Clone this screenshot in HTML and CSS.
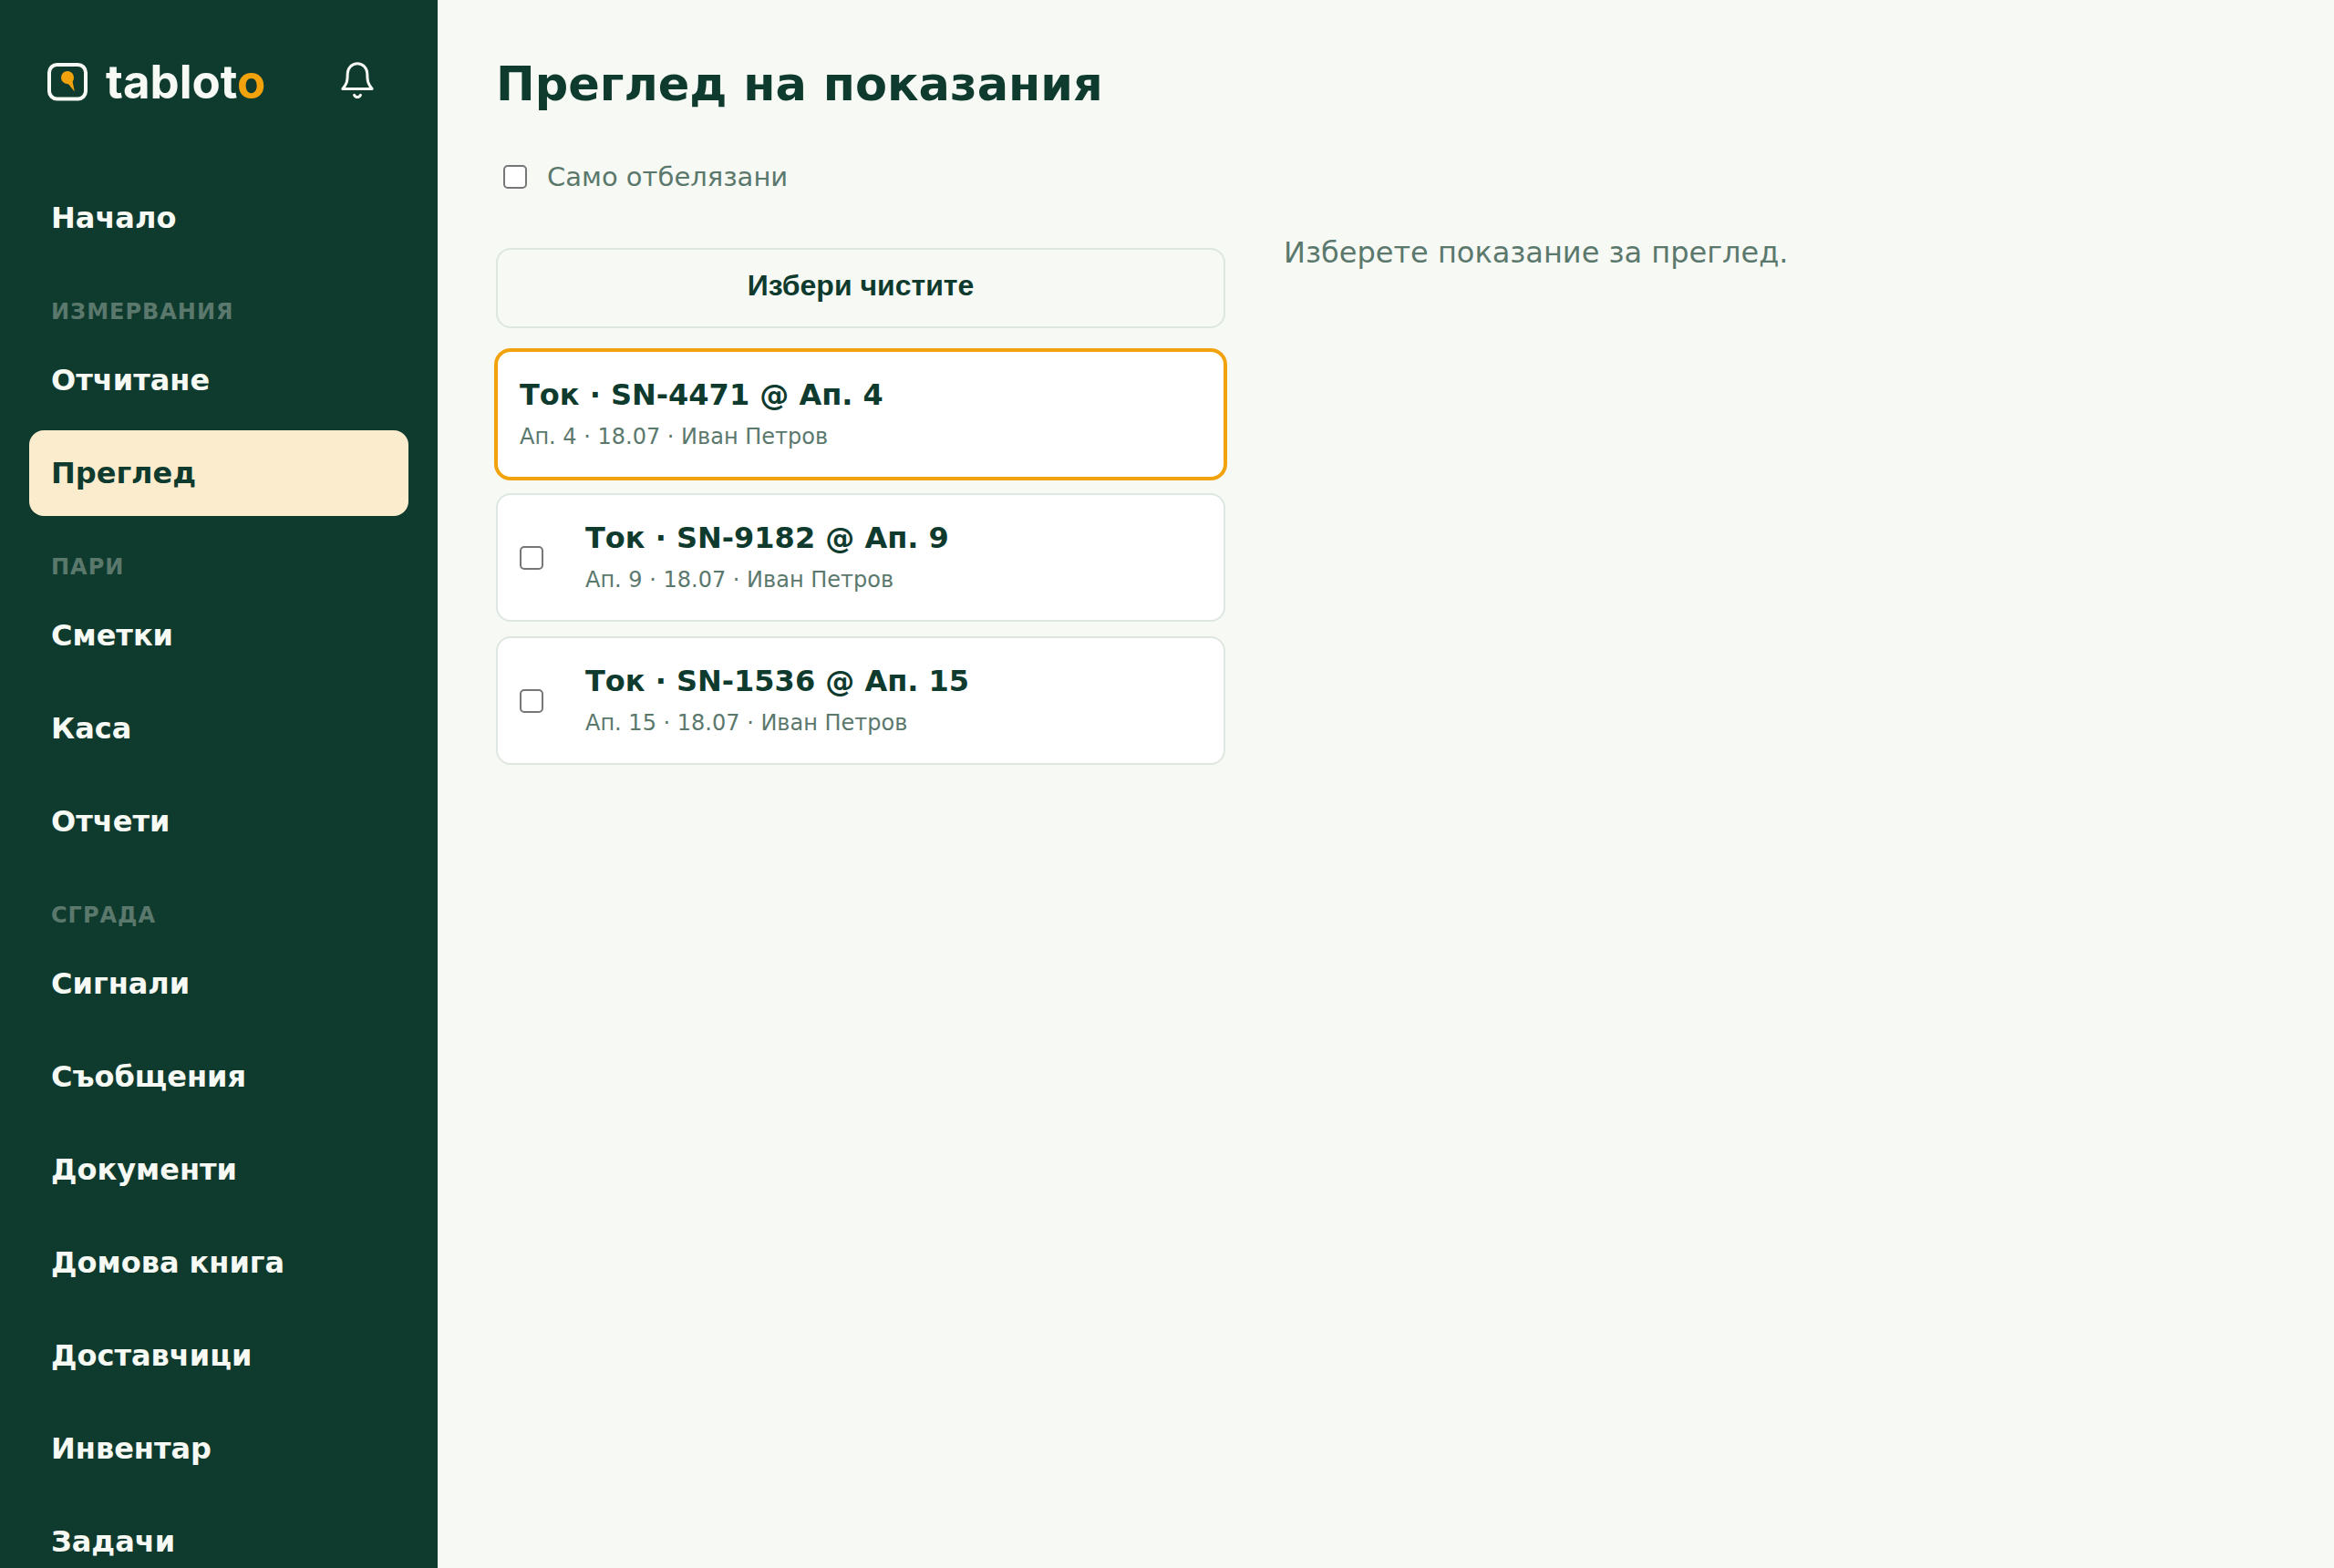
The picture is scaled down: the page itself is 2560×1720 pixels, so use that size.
FILE: index.html
```html
<!DOCTYPE html>
<html lang="bg">
  <head>
    <meta charset="UTF-8" />
    <meta name="viewport" content="width=device-width, initial-scale=1.0" />
    <title>Преглед на показания</title>
    <link rel="stylesheet" href="styles.css">
  </head>
  <body>
    <div class="app">
      <aside class="sidebar">
        <div class="sidebar-top">
          <a class="brand" href="#">
            <svg class="brand-mark" viewBox="0 0 44 42" aria-hidden="true">
              <rect x="2" y="2" width="40" height="37.5" rx="8.5" fill="none" stroke="#f7f9f4" stroke-width="4" />
              <circle cx="22" cy="16" r="7" fill="#f2a20c" />
              <path d="M21.5 22.9 C24 23 25 26 29.8 31.2 L27.6 20.5 L28.8 17 Z" fill="#f2a20c" />
            </svg>
            <span class="brand-name">tablot<span class="brand-accent">o</span></span>
          </a>
          <button class="bell" type="button" aria-label="Известия">
            <svg viewBox="0 0 44 44" aria-hidden="true">
              <path d="M11.2 15a10.8 11.3 0 0 1 21.6 0c0 8.5 1 11.5 5.4 16.4H5.8c4.4-4.9 5.4-7.9 5.4-16.4z" />
              <path d="M18.6 38.3c1.4 3 5.4 3 6.8 0" />
            </svg>
          </button>
        </div>
        <nav class="nav">
          <a class="nav-item" href="#">Начало</a>
          <div class="nav-label">Измервания</div>
          <a class="nav-item" href="#">Отчитане</a>
          <a class="nav-item active" href="#" aria-current="page">Преглед</a>
          <div class="nav-label">Пари</div>
          <a class="nav-item" href="#">Сметки</a>
          <a class="nav-item" href="#">Каса</a>
          <a class="nav-item" href="#">Отчети</a>
          <div class="nav-label">Сграда</div>
          <a class="nav-item" href="#">Сигнали</a>
          <a class="nav-item" href="#">Съобщения</a>
          <a class="nav-item" href="#">Документи</a>
          <a class="nav-item" href="#">Домова книга</a>
          <a class="nav-item" href="#">Доставчици</a>
          <a class="nav-item" href="#">Инвентар</a>
          <a class="nav-item" href="#">Задачи</a>
        </nav>
      </aside>

      <main class="main">
        <h1>Преглед на показания</h1>
        <label class="filter">
          <input type="checkbox" />
          Само отбелязани
        </label>
        <div class="review">
          <div class="list">
            <button class="select-clean" type="button">Избери чистите</button>
            <ul class="readings">
              <li class="reading flagged">
                <a class="reading-link" href="#">
                  <strong>Ток · SN-4471 @ Ап. 4</strong>
                  <span>Ап. 4 · 18.07 · Иван Петров</span>
                </a>
              </li>
              <li class="reading">
                <input type="checkbox" aria-label="SN-9182" />
                <a class="reading-link" href="#">
                  <strong>Ток · SN-9182 @ Ап. 9</strong>
                  <span>Ап. 9 · 18.07 · Иван Петров</span>
                </a>
              </li>
              <li class="reading">
                <input type="checkbox" aria-label="SN-1536" />
                <a class="reading-link" href="#">
                  <strong>Ток · SN-1536 @ Ап. 15</strong>
                  <span>Ап. 15 · 18.07 · Иван Петров</span>
                </a>
              </li>
            </ul>
          </div>
          <p class="empty">Изберете показание за преглед.</p>
        </div>
      </main>
    </div>
  </body>
</html>
```

FILE: styles.css
```css
* {
  box-sizing: border-box;
}

body {
  margin: 0;
  background: #f7f9f4;
  color: #0f3b2e;
  font-family: "DejaVu Sans", sans-serif;
  font-size: 32px;
  line-height: 46px;
}

a {
  color: inherit;
  text-decoration: none;
}

.app {
  display: grid;
  grid-template-columns: 480px 1fr;
  height: 100vh;
}

/* Sidebar */
.sidebar {
  padding: 40px 32px;
  background: #0f3b2e;
  color: #f7f9f4;
  overflow: hidden;
}

.sidebar-top {
  display: flex;
  align-items: center;
  justify-content: space-between;
  height: 96px;
  padding: 0 12px 0 20px;
  margin-bottom: 56px;
}

.brand {
  display: flex;
  align-items: center;
  gap: 20px;
  padding-top: 4px;
}

.brand-mark {
  width: 44px;
  height: 42px;
}

.brand-name {
  font-family: Inter, sans-serif;
  font-size: 51px;
  font-weight: 700;
}

.brand-accent {
  color: #f2a20c;
}

.bell {
  display: flex;
  align-items: center;
  justify-content: center;
  width: 88px;
  height: 88px;
  padding: 0;
  border: none;
  background: none;
  color: #f7f9f4;
  cursor: pointer;
}

.bell svg {
  width: 44px;
  height: 44px;
  fill: none;
  stroke: currentColor;
  stroke-width: 3;
  stroke-linecap: round;
  stroke-linejoin: round;
}

.nav {
  display: flex;
  flex-direction: column;
  gap: 8px;
}

.nav-item {
  padding: 24px;
  border-radius: 16px;
  font-weight: 700;
}

.nav-item.active {
  background: #fcecce;
  color: #0f3b2e;
}

.nav-label {
  padding: 30px 24px 2px;
  color: #5b786d;
  font-size: 24px;
  font-weight: 700;
  line-height: 36px;
  letter-spacing: 1px;
  text-transform: uppercase;
}

/* Main column */
.main {
  padding: 56px 64px;
}

h1 {
  margin: 0;
  font-size: 51px;
  line-height: 74px;
}

input[type="checkbox"] {
  flex: none;
  width: 26px;
  height: 26px;
  margin: 0;
  appearance: none;
  border: 2px solid #767676;
  border-radius: 5px;
  background: #fff;
}

input[type="checkbox"]:checked {
  background: #0f3b2e;
}

.filter {
  display: inline-flex;
  align-items: center;
  gap: 22px;
  margin: 44px 0 40px;
  padding-left: 8px;
  color: #5b786d;
  font-size: 29px;
  line-height: 40px;
}

.review {
  display: grid;
  grid-template-columns: 800px 1fr;
  gap: 64px;
}

.select-clean {
  width: 100%;
  height: 88px;
  margin: 18px 0 24px;
  padding: 0 0 6px;
  border: 2px solid #dde6e0;
  border-radius: 16px;
  background: none;
  color: #0f3b2e;
  font-family: "Liberation Sans", Arial, sans-serif;
  font-size: 32px;
  font-weight: 700;
  cursor: pointer;
}

.readings {
  display: flex;
  flex-direction: column;
  gap: 16px;
  margin: 0;
  padding: 0;
  list-style: none;
}

.reading {
  display: flex;
  align-items: center;
  gap: 46px;
  padding: 24px;
  border: 2px solid #dde6e0;
  border-radius: 16px;
  background: #fff;
}

.reading.flagged {
  border-color: #f2a20c;
  box-shadow: 0 0 0 2px #f2a20c;
}

.reading-link {
  flex: 1;
}

.reading strong,
.reading span {
  display: block;
}

.reading span {
  margin-top: 4px;
  color: #5b786d;
  font-size: 24px;
  line-height: 39px;
}

.empty {
  margin: 0;
  color: #5b786d;
}
```
